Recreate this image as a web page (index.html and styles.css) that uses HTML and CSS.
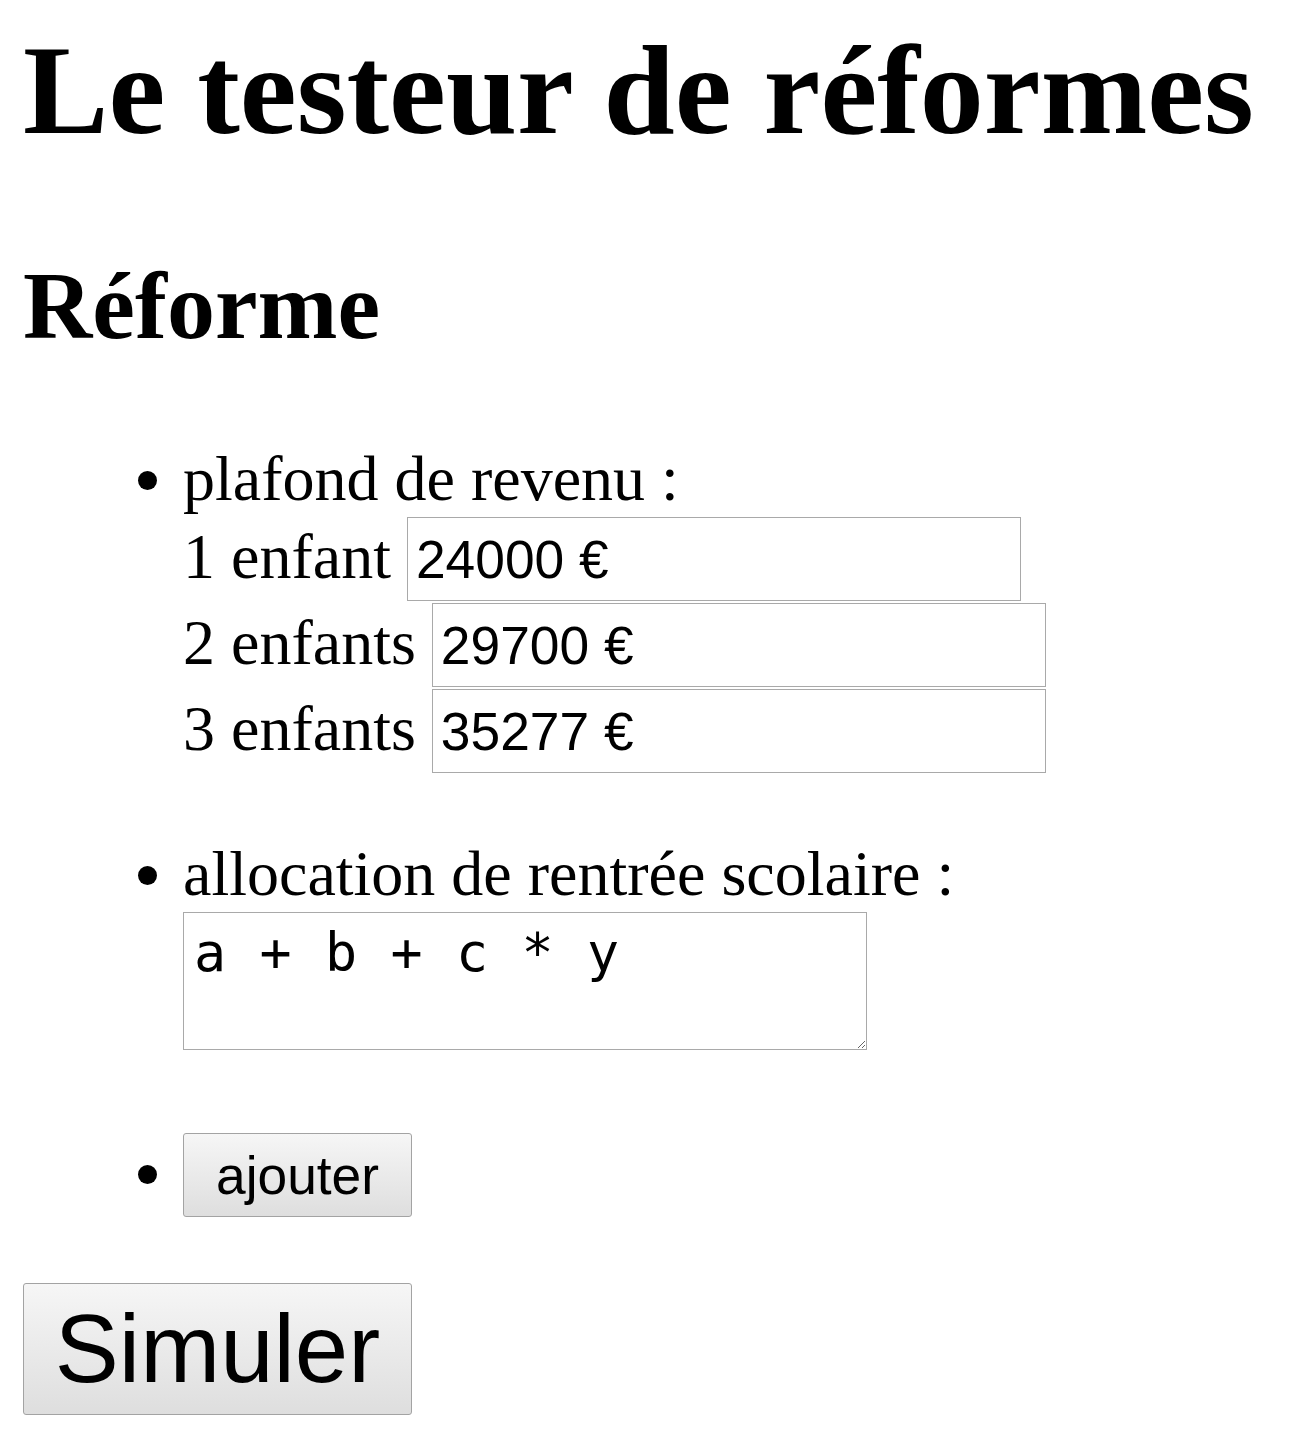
FILE: index.html
```html
<!DOCTYPE html>
<html lang="fr">
<head>
<meta charset="utf-8">
<title>Le testeur de réformes</title>
<link rel="stylesheet" href="styles.css">
</head>
<body>
<div class="page">
  <h1 class="title">Le testeur de réformes</h1>
  <h2 class="subtitle">Réforme</h2>
  <ul class="reform">
    <li class="item item-plafond">
      <div class="item-label">plafond de revenu :</div>
      <div class="rows">
        <div class="row"><span class="row-label">1 enfant</span><input class="field" type="text" value="24000 €"></div>
        <div class="row"><span class="row-label">2 enfants</span><input class="field" type="text" value="29700 €"></div>
        <div class="row"><span class="row-label">3 enfants</span><input class="field" type="text" value="35277 €"></div>
      </div>
    </li>
    <li class="item item-ars">
      <div class="item-label">allocation de rentrée scolaire :</div>
      <textarea class="formula">a + b + c * y</textarea>
    </li>
    <li class="item item-add">
      <button class="btn btn-add" type="button">ajouter</button>
    </li>
  </ul>
  <button class="btn btn-run" type="button">Simuler</button>
</div>
</body>
</html>
```

FILE: styles.css
```css
html, body {
  margin: 0;
  padding: 0;
  background: #ffffff;
}

body {
  font-family: "Liberation Serif", "Times New Roman", serif;
  font-size: 64px;
  color: #000000;
}

.page {
  padding: 17px 0 0 23px;
}

.title {
  font-size: 128px;
  font-weight: bold;
  margin: 0 0 86px 0;
  line-height: normal;
}

.subtitle {
  font-size: 96px;
  font-weight: bold;
  margin: 0;
  line-height: normal;
}

.reform {
  list-style: disc;
  margin: 81px 0 0 0;
  padding: 0 0 0 160px;
}

.item {
  line-height: normal;
}

.item-ars {
  margin-top: 64px;
}

.item-add {
  margin-top: 83px;
}

.rows {
  display: flex;
  flex-direction: column;
  gap: 2px;
  padding-top: 1px;
}

.row {
  display: flex;
  align-items: baseline;
  gap: 16px;
}

.row-label {
  white-space: nowrap;
}

.field {
  box-sizing: border-box;
  width: 614px;
  height: 84px;
  margin: 0;
  padding: 0 8px;
  border: 1px solid #a9a9a9;
  border-radius: 0;
  font-family: "Liberation Sans", Arial, sans-serif;
  font-size: 53.33px;
  color: #000000;
  background: #ffffff;
  outline: none;
}

.formula {
  display: block;
  box-sizing: border-box;
  width: 684px;
  height: 138px;
  margin: 1px 0 0 0;
  padding: 8px 10px;
  border: 1px solid #a9a9a9;
  font-family: "DejaVu Sans Mono", monospace;
  font-size: 53.33px;
  letter-spacing: 0.65px;
  line-height: normal;
  color: #000000;
  background: #ffffff;
  resize: both;
  overflow: hidden;
}

.btn {
  box-sizing: border-box;
  margin: 0;
  padding: 0;
  border: 1px solid #a3a3a3;
  border-radius: 3px;
  background: linear-gradient(to bottom, #f6f6f6 0%, #dedede 100%);
  font-family: "Liberation Sans", Arial, sans-serif;
  color: #000000;
  text-align: center;
  vertical-align: baseline;
}

.btn-add {
  width: 229px;
  height: 84px;
  font-size: 53.33px;
}

.btn-run {
  display: block;
  width: 389px;
  height: 132px;
  margin-top: 66px;
  font-size: 96px;
}
```
